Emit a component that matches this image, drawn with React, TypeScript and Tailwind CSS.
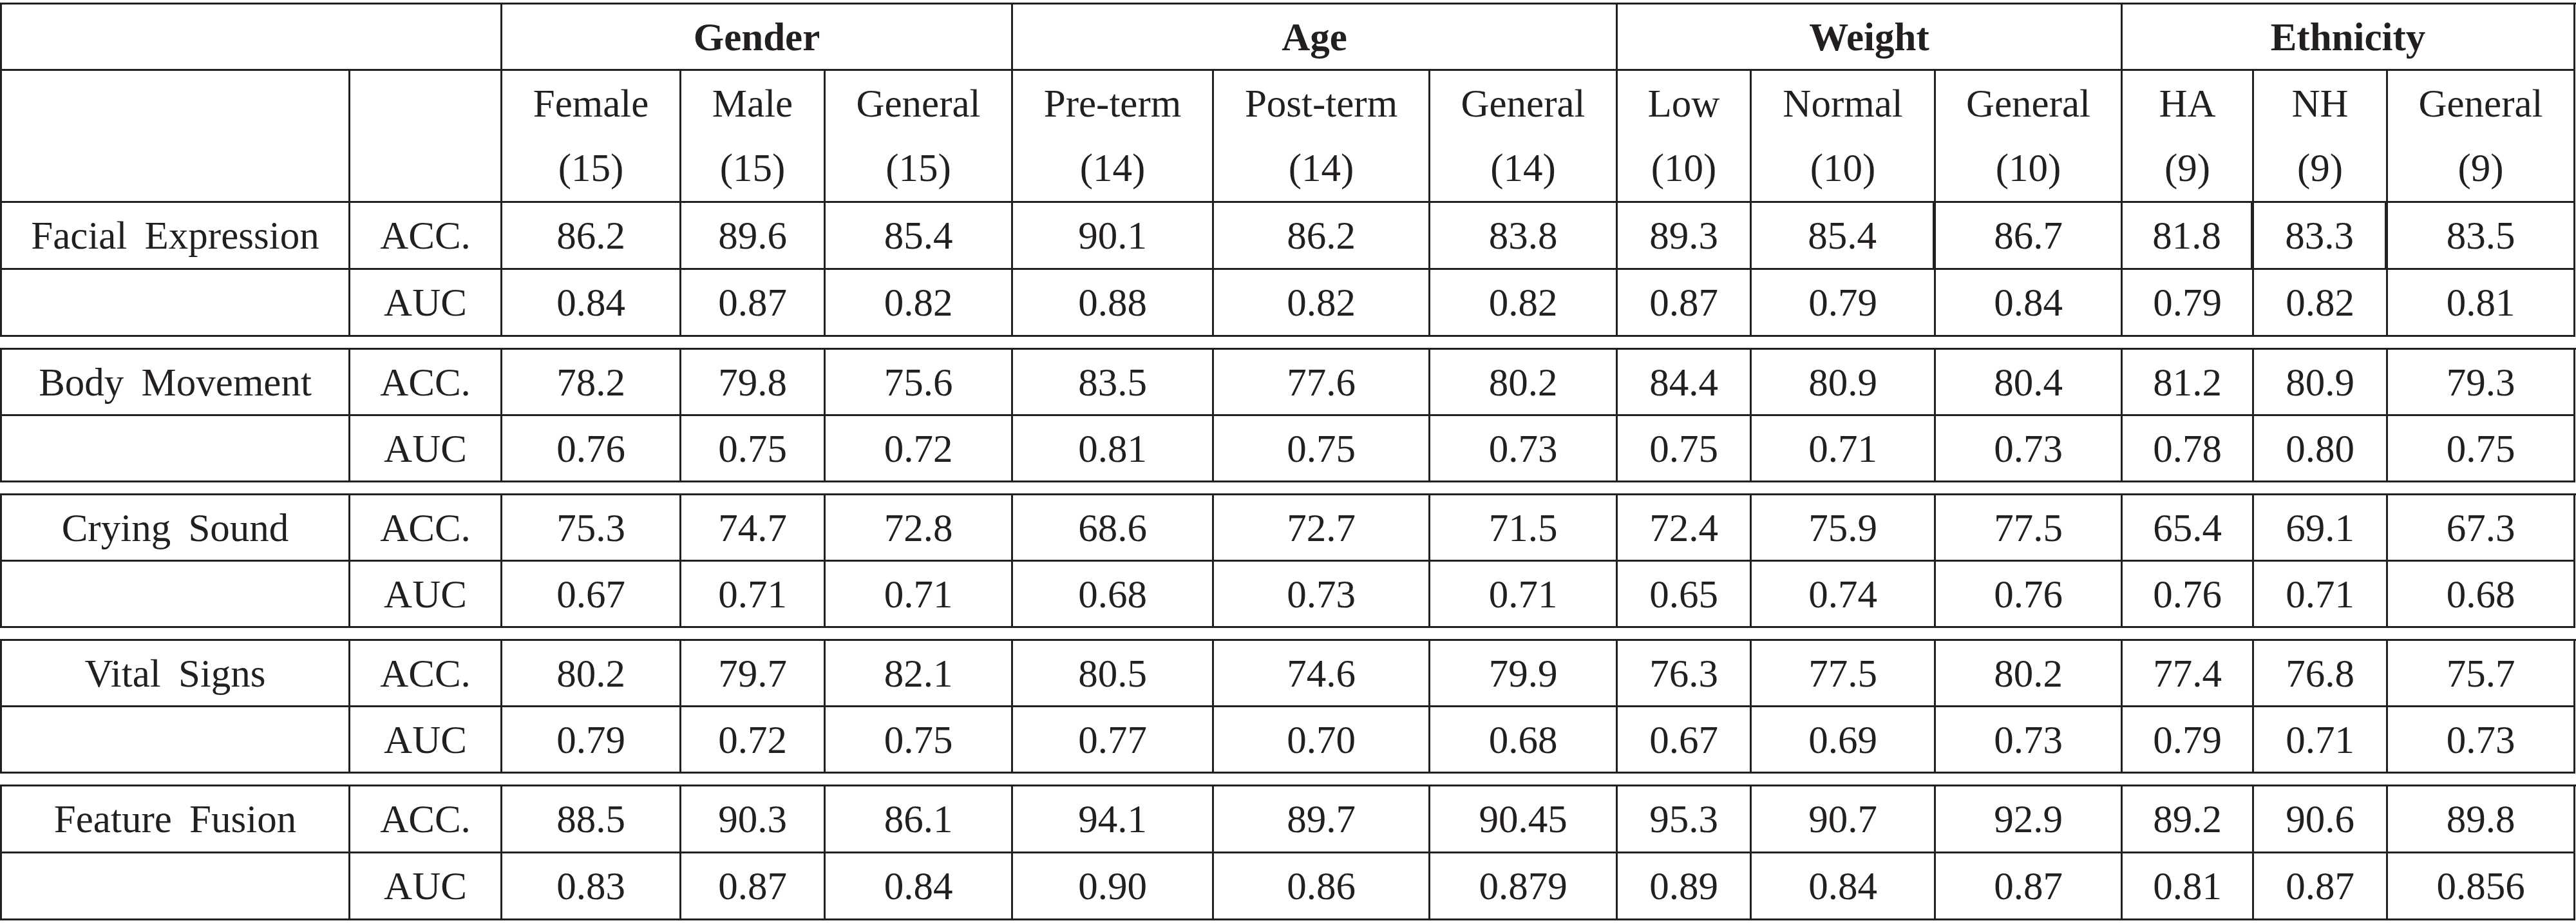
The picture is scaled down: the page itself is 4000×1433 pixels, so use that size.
import React from 'react';

interface MetricRow {
  label: string;
  acc: string[];
  auc: string[];
}

const GROUPS = ['Gender', 'Age', 'Weight', 'Ethnicity'];

const SUB_HEADERS: [string, string][] = [
  ['Female', '(15)'],
  ['Male', '(15)'],
  ['General', '(15)'],
  ['Pre-term', '(14)'],
  ['Post-term', '(14)'],
  ['General', '(14)'],
  ['Low', '(10)'],
  ['Normal', '(10)'],
  ['General', '(10)'],
  ['HA', '(9)'],
  ['NH', '(9)'],
  ['General', '(9)'],
];

const ROWS: MetricRow[] = [
  {
    label: 'Facial Expression',
    acc: ['86.2', '89.6', '85.4', '90.1', '86.2', '83.8', '89.3', '85.4', '86.7', '81.8', '83.3', '83.5'],
    auc: ['0.84', '0.87', '0.82', '0.88', '0.82', '0.82', '0.87', '0.79', '0.84', '0.79', '0.82', '0.81'],
  },
  {
    label: 'Body Movement',
    acc: ['78.2', '79.8', '75.6', '83.5', '77.6', '80.2', '84.4', '80.9', '80.4', '81.2', '80.9', '79.3'],
    auc: ['0.76', '0.75', '0.72', '0.81', '0.75', '0.73', '0.75', '0.71', '0.73', '0.78', '0.80', '0.75'],
  },
  {
    label: 'Crying Sound',
    acc: ['75.3', '74.7', '72.8', '68.6', '72.7', '71.5', '72.4', '75.9', '77.5', '65.4', '69.1', '67.3'],
    auc: ['0.67', '0.71', '0.71', '0.68', '0.73', '0.71', '0.65', '0.74', '0.76', '0.76', '0.71', '0.68'],
  },
  {
    label: 'Vital Signs',
    acc: ['80.2', '79.7', '82.1', '80.5', '74.6', '79.9', '76.3', '77.5', '80.2', '77.4', '76.8', '75.7'],
    auc: ['0.79', '0.72', '0.75', '0.77', '0.70', '0.68', '0.67', '0.69', '0.73', '0.79', '0.71', '0.73'],
  },
  {
    label: 'Feature Fusion',
    acc: ['88.5', '90.3', '86.1', '94.1', '89.7', '90.45', '95.3', '90.7', '92.9', '89.2', '90.6', '89.8'],
    auc: ['0.83', '0.87', '0.84', '0.90', '0.86', '0.879', '0.89', '0.84', '0.87', '0.81', '0.87', '0.856'],
  },
];

// column tracks measured off the reference (each includes its right rule)
const GRID =
  'grid grid-cols-[541px_236px_278px_224px_291px_312px_336px_291px_208px_286px_290px_204px_208px_291px] border-l-[3px] border-t-[3px] border-[#231f20]';

const cell = 'flex items-center justify-center border-b-[3px] border-[#231f20]';

const MetricBlock: React.FC<{ row: MetricRow; rowH: string; heavy?: number[] }> = ({ row, rowH, heavy = [] }) => (
  <>
    <div className={`${cell} border-r-[3px] ${rowH} [word-spacing:12px]`}>{row.label}</div>
    <div className={`${cell} border-r-[3px] ${rowH}`}>ACC.</div>
    {row.acc.map((v, i) => (
      <div
        key={`acc-${i}`}
        className={`${cell} ${rowH} ${heavy.includes(i) ? 'border-r-[5px]' : 'border-r-[3px]'}`}
      >
        {v}
      </div>
    ))}
    <div className={`${cell} border-r-[3px] ${rowH}`} />
    <div className={`${cell} border-r-[3px] ${rowH}`}>AUC</div>
    {row.auc.map((v, i) => (
      <div key={`auc-${i}`} className={`${cell} border-r-[3px] ${rowH}`}>
        {v}
      </div>
    ))}
  </>
);

const App: React.FC = () => {
  return (
    <div className="w-[4000px] min-h-[1433px] bg-white pt-[4px] text-[61px] leading-none text-[#231f20] font-['Liberation_Serif','Times_New_Roman',serif]">
      <div className="flex flex-col gap-[17px]">
        {/* Header + first modality */}
        <div className={GRID}>
          <div className={`${cell} border-r-[3px] col-span-2 h-[103px]`} />
          {GROUPS.map((g) => (
            <div key={g} className={`${cell} border-r-[3px] col-span-3 h-[103px] font-bold`}>
              {g}
            </div>
          ))}
          <div className={`${cell} border-r-[3px] h-[205px]`} />
          <div className={`${cell} border-r-[3px] h-[205px]`} />
          {SUB_HEADERS.map(([name, count], i) => (
            <div key={i} className={`${cell} border-r-[3px] h-[205px] flex-col`}>
              <span className="leading-[100px]">{name}</span>
              <span className="leading-[100px]">{count}</span>
            </div>
          ))}
          <MetricBlock row={ROWS[0]} rowH="h-[104px]" heavy={[7, 9, 10]} />
        </div>

        {/* Remaining modalities, each in its own box */}
        {ROWS.slice(1).map((row, i) => (
          <div key={row.label} className={GRID}>
            <MetricBlock row={row} rowH={i === ROWS.length - 2 ? 'h-[104px]' : 'h-[103px]'} />
          </div>
        ))}
      </div>
    </div>
  );
};

export default App;
